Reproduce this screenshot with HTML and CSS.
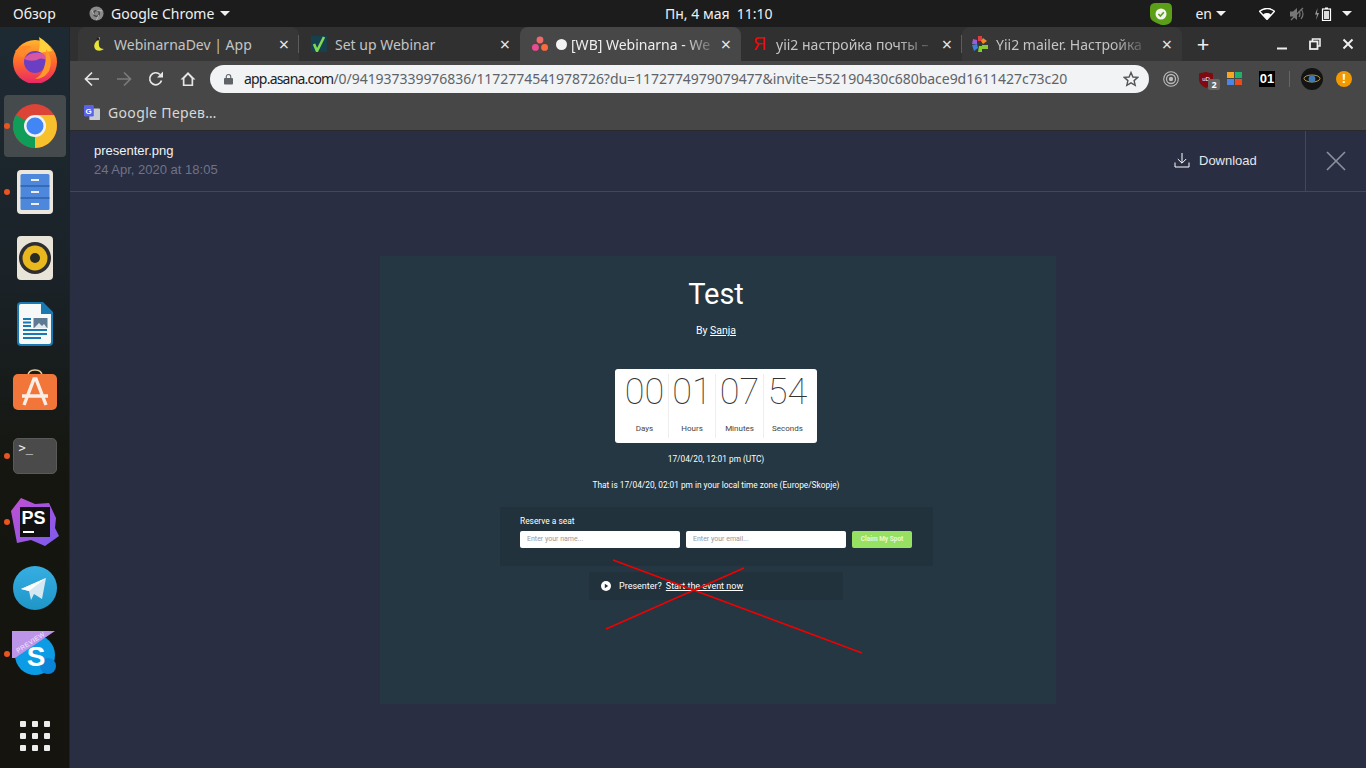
FILE: index.html
```html
<!DOCTYPE html>
<html lang="ru">
<head>
<meta charset="UTF-8">
<meta name="viewport" content="width=device-width, initial-scale=1.0">
<title>presenter.png</title>
<link rel="stylesheet" href="styles.css">
</head>
<body>

<!-- gnome top bar -->
<header class="topbar">
    <span class="overview">Обзор</span>
    <span class="app-menu">
        <svg class="app-icon" viewBox="0 0 16 16"><circle cx="8" cy="8" r="7.5" fill="#8a8a8a"/><circle cx="8" cy="8" r="3" fill="none" stroke="#444" stroke-width="1.4"/><path d="M8 5h6M5.5 9.5 3 4.5M10.5 9.5 8 15" stroke="#bdbdbd" stroke-width="1"/></svg>
        Google Chrome
        <i class="caret"></i>
    </span>
    <span class="clock">Пн, 4 мая&nbsp; 11:10</span>
    <div class="tray">
        <svg class="tray-shield" viewBox="0 0 22 22"><path d="M6 0h11q5 0 5 5v10q0 6-7 7-3 .4-6-1-3-1-6-3-3-2-3-6V5q0-5 6-5z" fill="#5b9e17"/><circle cx="11" cy="11" r="5.5" fill="#f4f4f4"/><path d="M8.4 11l2 2 3.4-3.8" fill="none" stroke="#5b9e17" stroke-width="1.6"/></svg>
        <span class="lang">en</span>
        <i class="caret caret-lang"></i>
        <svg class="tray-wifi" viewBox="0 0 16 12"><path d="M.5 3.2Q8-2.2 15.500 3.200L8 11.500z" fill="none" stroke="#fff" stroke-width="1.4"/><path d="M4 6.400Q8 3.800 12 6.400L8 11z" fill="#fff"/></svg>
        <svg class="tray-volume" viewBox="0 0 16 14"><path d="M1 4.500h3l4-3.500v12l-4-3.500H1z" fill="#777"/><path d="M10 4q2 3 0 6M12 2q4 5 0 10" fill="none" stroke="#777" stroke-width="1.2"/><path d="M2 13 14 1" stroke="#777" stroke-width="1.2"/></svg>
        <svg class="tray-battery" viewBox="0 0 20 14" width="24" height="14"><path d="M3.500 1 1 7.500h2L2 13l3-7H3z" fill="#999"/><rect x="8.500" y="2" width="8" height="11.500" fill="none" stroke="#fff" stroke-width="1.2"/><rect x="11" y=".5" width="3" height="1.500" fill="#fff"/><rect x="10" y="4" width="5" height="8" fill="#ddd"/></svg>
        <i class="caret"></i>
    </div>
</header>

<div class="desktop">
    <!-- dock -->
    <nav class="dock">
        <div class="dock-item">
            <svg viewBox="0 0 46 46" width="46" height="46"><defs><linearGradient id="ffx" x1="0" y1="0" x2="0" y2="1"><stop offset="0" stop-color="#ffb52e"/><stop offset=".5" stop-color="#ff6a2a"/><stop offset="1" stop-color="#e8256a"/></linearGradient></defs><circle cx="23" cy="25" r="22" fill="url(#ffx)"/><path d="M27 0q10 6 13 14l-14 2q3-8 1-16z" fill="#ffd23c"/><path d="M3 14q8-8 17-4-7 2-9 10-4-1-8-6z" fill="#ff8a2a"/><circle cx="23" cy="25" r="11" fill="#6a3fc4"/><path d="M12 22q7-9 20-5l3 6q-7-3-10 0-7 2-13-1z" fill="#d8559f"/><path d="M34 12q8 10 3 22-5 8-14 8 12-6 11-30z" fill="#ff9a2a"/></svg>
        </div>
        <div class="dock-item is-active is-running">
            <svg viewBox="0 0 44 44" width="44" height="44"><circle cx="22" cy="22" r="22" fill="#db4437"/><path d="M22 22 3 11A22 22 0 0 0 22 44z" fill="#0f9d58"/><path d="M22 11h19a22 22 0 0 1-19 33z" fill="#f7c12e"/><circle cx="22" cy="22" r="11" fill="#f1f1f1"/><circle cx="22" cy="22" r="8.500" fill="#4285f4"/></svg>
        </div>
        <div class="dock-item is-running">
            <svg viewBox="0 0 36 44" width="36" height="44"><rect width="36" height="44" rx="4" fill="#ebe7dc"/><rect x="3.500" y="4" width="29" height="36" rx="1.500" fill="#4d88dd"/><path d="M3.500 16h29M3.500 28h29" stroke="#1d4c90" stroke-width="1"/><path d="M14 10h8M14 22h8M14 34h8" stroke="#eee" stroke-width="2"/></svg>
        </div>
        <div class="dock-item">
            <svg viewBox="0 0 36 44" width="36" height="44"><rect width="36" height="44" rx="4" fill="#e8e4d8"/><circle cx="18" cy="22" r="16" fill="#2e2e30"/><circle cx="18" cy="22" r="12.500" fill="#e8b81e"/><circle cx="18" cy="22" r="5" fill="#2b2b25"/></svg>
        </div>
        <div class="dock-item">
            <svg viewBox="0 0 36 44" width="36" height="44"><path d="M4 0h22l10 10v30q0 4-4 4H4q-4 0-4-4V4q0-4 4-4z" fill="#1a79b0"/><path d="M4 2h20v10h10v28q0 2-2 2H4q-2 0-2-2V4q0-2 2-2z" fill="#f7f8f8"/><path d="M6 17h8M6 20.500h8M6 24h8M6 28h24M6 32h24M6 36h18" stroke="#1a79b0" stroke-width="1.800"/><rect x="16.500" y="16" width="14" height="10" fill="#5d7a92"/><path d="M17 26l5-5 3 3 2-2 3 4z" fill="#e3e8ec"/></svg>
        </div>
        <div class="dock-item">
            <svg viewBox="0 0 44 44" width="44" height="44"><path d="M15 8q0-6 7-6t7 6" fill="none" stroke="#eccf9c" stroke-width="1.500"/><rect y="6" width="44" height="36" rx="5" fill="#f2763a"/><path d="M11 37 21 11h2l10 26M9 28h26" fill="none" stroke="#fbeee6" stroke-width="3.400"/></svg>
        </div>
        <div class="dock-item is-running">
            <div class="term-icon">&gt;_</div>
        </div>
        <div class="dock-item is-running">
            <svg class="ps-shape" viewBox="0 0 48 48" width="48" height="48"><defs><linearGradient id="psg" x1="0" y1="0" x2="1" y2="1"><stop offset="0" stop-color="#c24fd0"/><stop offset="1" stop-color="#7a5cf0"/></linearGradient></defs><path d="M10 0l14 6 14-1 7 15-1 10 4 8-14 10-14-6-14 3L0 13z" fill="url(#psg)"/></svg>
            <div class="ps-icon">PS<i></i></div>
        </div>
        <div class="dock-item">
            <svg viewBox="0 0 44 44" width="44" height="44"><defs><linearGradient id="tg" x1="0" y1="0" x2="0" y2="1"><stop offset="0" stop-color="#37aee2"/><stop offset="1" stop-color="#1e96c8"/></linearGradient></defs><circle cx="22" cy="22" r="22" fill="url(#tg)"/><path d="M8 23 33 12l-4 21-8-5-3 6-2-9z" fill="#d6e8f2"/><path d="M8 23 33 12 16 25z" fill="#fff"/></svg>
        </div>
        <div class="dock-item is-running">
            <svg class="skype-icon" viewBox="0 0 46 46" width="46" height="46"><circle cx="23" cy="24" r="20" fill="#0c9ce5"/><circle cx="36" cy="35" r="8" fill="#0a84d6"/><path d="M0 0h43L3 27H0z" fill="#bd95e8"/><text class="preview-tag" x="6" y="22" transform="rotate(-33 6 22)">PREVIEW</text><text class="skype-s" x="24" y="35">S</text></svg>
        </div>
        <div class="dock-apps">
            <i></i><i></i><i></i><i></i><i></i><i></i><i></i><i></i><i></i>
        </div>
    </nav>

    <main class="browser">
        <!-- tabs -->
        <div class="tabstrip">
            <div class="tab tab-first">
                <svg class="favicon" viewBox="0 0 16 16"><path d="M9 1q-1 3-4 6-2 4 1 7 4 2 8-1-4 0-5-3-1-4 1-8z" fill="#e8e337"/><circle cx="8" cy="3" r="1.500" fill="#222"/></svg>
                <span class="tab-title">WebinarnaDev | App</span>
                <span class="tab-close">×</span>
            </div>
            <div class="tab tab-nosep">
                <svg class="favicon" viewBox="0 0 16 16"><rect width="16" height="16" fill="#17404e"/><path d="M3 8l3 7 7-14" fill="none" stroke="#7ed957" stroke-width="2.600"/></svg>
                <span class="tab-title">Set up Webinar</span>
                <span class="tab-close">×</span>
            </div>
            <div class="tab tab-active tab-nosep">
                <svg class="favicon" viewBox="0 0 14 14"><circle cx="7" cy="3.500" r="3" fill="#f06a6a"/><circle cx="3" cy="10" r="3" fill="#ec4b8f"/><circle cx="11" cy="10" r="3" fill="#ff6a3c"/></svg>
                <span class="tab-dot"></span>
                <span class="tab-title tab-fade">[WB] Webinarna - We</span>
                <span class="tab-close">×</span>
            </div>
            <div class="tab">
                <span class="favicon-ya">Я</span>
                <span class="tab-title tab-fade">yii2 настройка почты –</span>
                <span class="tab-close">×</span>
            </div>
            <div class="tab tab-last tab-nosep">
                <svg class="favicon" viewBox="0 0 16 16"><path d="M6 0h4v5H6z" fill="#e23b3b"/><path d="M11 2l4 3-4 3-2-3z" fill="#f08a24"/><path d="M16 9v4h-6V9z" fill="#8bc53f"/><path d="M10 16H6l1-6h3z" fill="#7ed321"/><path d="M0 9l5-1 1 4-4 3z" fill="#3d7fd9"/><path d="M1 3l4 1v4H0z" fill="#a05ad6"/></svg>
                <span class="tab-title tab-fade">Yii2 mailer. Настройка</span>
                <span class="tab-close">×</span>
            </div>
            <span class="tab-new">+</span>
            <div class="win-controls">
                <svg viewBox="0 0 12 12"><path d="M1 10.500h10" stroke="#eee" stroke-width="2"/></svg>
                <svg viewBox="0 0 12 12"><path d="M3.500 3.500V1h7.500v7H8.500" fill="none" stroke="#eee" stroke-width="1.600"/><rect x="1" y="3.500" width="7.500" height="7.500" fill="none" stroke="#eee" stroke-width="1.800"/></svg>
                <svg viewBox="0 0 12 12"><path d="M1.500 1.500l9 9m0-9-9 9" stroke="#eee" stroke-width="2"/></svg>
            </div>
        </div>

        <!-- address bar -->
        <div class="toolbar">
            <svg class="nav-btn" viewBox="0 0 16 16"><path d="M15 8H2m6-6.500L1.500 8 8 14.500" fill="none" stroke="#e6e6e6" stroke-width="1.700"/></svg>
            <svg class="nav-btn" viewBox="0 0 16 16"><path d="M1 8h13M8 1.500 14.500 8 8 14.500" fill="none" stroke="#7b7b7b" stroke-width="1.700"/></svg>
            <svg class="nav-btn" viewBox="0 0 16 16"><path d="M13.500 9.500A6 6 0 1 1 12 3.500" fill="none" stroke="#e6e6e6" stroke-width="1.700"/><path d="M9 6.500h6v-6z" fill="#e6e6e6"/></svg>
            <svg class="nav-btn" viewBox="0 0 16 16"><path d="M8 1 .5 8.500h2.300V15h10.400V8.500h2.300zM4.500 13.500V7.500L8 3.800l3.500 3.700v6z" fill="#e6e6e6"/></svg>
            <div class="omnibox">
                <svg class="lock" viewBox="0 0 10 12"><path d="M2.500 5V3.500a2.500 2.500 0 0 1 5 0V5" fill="none" stroke="#5f6368" stroke-width="1.200"/><rect y="5" width="10" height="7" rx="1" fill="#5f6368"/></svg>
                <span class="url"><b>app.asana.com</b>/0/941937339976836/1172774541978726?du=1172774979079477&amp;invite=552190430c680bace9d1611427c73c20</span>
                <svg class="star" viewBox="0 0 16 16"><path d="M8 1.500 9.900 6l4.900.4-3.700 3.200 1.100 4.800L8 11.900l-4.200 2.500 1.100-4.800L1.200 6.400 6.100 6z" fill="none" stroke="#555" stroke-width="1.400"/></svg>
            </div>
            <div class="extensions">
                <svg class="ext" viewBox="0 0 16 16"><circle cx="8" cy="8" r="7.300" fill="none" stroke="#bbb" stroke-width="1.100"/><circle cx="8" cy="8" r="4.500" fill="none" stroke="#bbb" stroke-width="1.300"/><circle cx="8" cy="8" r="2.200" fill="#bbb"/></svg>
                <div class="ext-ublock">
                    <svg viewBox="0 0 14 16" width="14" height="16"><path d="M0 1.500 7 0l7 1.500v6Q14 13 7 16 0 13 0 7.500z" fill="#7f0a0f"/><text class="ublock-mark" x="7" y="9">uD</text></svg>
                    <span class="ublock-badge">2</span>
                </div>
                <div class="ext-squares"><i></i><i></i><i></i><i></i></div>
                <span class="ext-binary">01</span>
                <span class="ext-sep"></span>
                <svg class="ext-globe" viewBox="0 0 22 22"><circle cx="11" cy="11" r="11" fill="#141414"/><ellipse cx="11" cy="10.500" rx="8" ry="3.500" fill="none" stroke="#b59a45" stroke-width="1"/><circle cx="11" cy="11" r="3.400" fill="#3f79b8"/></svg>
                <span class="ext-warn">!</span>
            </div>
        </div>

        <!-- bookmarks -->
        <div class="bookmarks">
            <svg class="favicon" viewBox="0 0 18 18"><rect x="6" y="4" width="12" height="13" rx="1" fill="#c8ccd2"/><rect width="11" height="13" rx="1.500" fill="#5a63e8"/><text class="translate-g" x="5.500" y="10">G</text></svg>
            <span>Google Перев…</span>
        </div>

        <!-- attachment viewer -->
        <section class="viewer">
            <div class="viewer-head">
                <div class="file-info">
                    <div class="file-name">presenter.png</div>
                    <div class="file-date">24 Apr, 2020 at 18:05</div>
                </div>
                <div class="download">
                    <svg viewBox="0 0 16 16" width="16" height="16"><path d="M8 1v10M3.800 7 8 11.200 12.200 7M1 10.500V15h14v-4.500" fill="none" stroke="#fff" stroke-width="1"/></svg>
                    Download
                </div>
                <div class="viewer-close">
                    <svg viewBox="0 0 20 20" width="20" height="20"><path d="M1 1l18 18M19 1 1 19" stroke="#8b8f9e" stroke-width="1.700"/></svg>
                </div>
            </div>

            <div class="viewer-body">
                <div class="shot">
                    <h1 class="shot-title">Test</h1>
                    <p class="shot-by">By <u>Sanja</u></p>
                    <div class="countdown">
                        <div class="count-cell"><b>00</b><span>Days</span></div>
                        <div class="count-cell"><b>01</b><span>Hours</span></div>
                        <div class="count-cell"><b>07</b><span>Minutes</span></div>
                        <div class="count-cell"><b>54</b><span>Seconds</span></div>
                    </div>
                    <p class="shot-date">17/04/20, 12:01 pm (UTC)</p>
                    <p class="shot-zone">That is 17/04/20, 02:01 pm in your local time zone (Europe/Skopje)</p>
                    <div class="reserve">
                        <div class="reserve-label">Reserve a seat</div>
                        <div class="reserve-row">
                            <div class="fake-input">Enter your name...</div>
                            <div class="fake-input">Enter your email...</div>
                            <div class="claim">Claim My Spot</div>
                        </div>
                    </div>
                    <div class="presenter">
                        <svg viewBox="0 0 10 10" width="10" height="10"><circle cx="5" cy="5" r="5" fill="#fff"/><path d="M3.800 2.800 7.200 5 3.800 7.200z" fill="#22323c"/></svg>
                        <span>Presenter?</span>
                        <u>Start the event now</u>
                    </div>
                    <!-- red cross drawn over the picture -->
                    <svg class="scribble" viewBox="0 0 676 448" width="676" height="448"><path d="M233 304 482 397M226 373 364 312" fill="none" stroke="#f00000" stroke-width="1.500"/></svg>
                </div>
            </div>
        </section>
    </main>
</div>

</body>
</html>
```

FILE: styles.css
```css
* {
    box-sizing: border-box;
}
html, body {
    height: 100%;
}
body {
    margin: 0;
    overflow: hidden;
    background-color: #1c1c1c;
    font-family: "Noto Sans", sans-serif;
    display: flex;
    flex-direction: column;
}

/* top bar */
.topbar {
    height: 27px;
    flex: none;
    display: flex;
    align-items: center;
    background-color: #1c1c1c;
    color: #f0f0f0;
    font-size: 14px;
    padding-left: 13px;
}
.overview {
    width: 76px;
}
.app-menu {
    display: flex;
    align-items: center;
    width: 576px;
}
.app-icon {
    width: 15px;
    height: 15px;
    margin-right: 7px;
}
.caret {
    width: 0;
    height: 0;
    border-left: 5px solid transparent;
    border-right: 5px solid transparent;
    border-top: 5px solid #f0f0f0;
    margin-left: 6px;
}
.caret-lang {
    margin-left: 4px;
}
.clock {
    font-size: 14px;
}
.tray {
    margin-left: auto;
    display: flex;
    align-items: center;
    padding-right: 14px;
}
.tray-shield {
    width: 22px;
    height: 22px;
    margin-right: 23px;
}
.lang {
    font-size: 14px;
}
.tray-wifi {
    width: 16px;
    height: 12px;
    margin-left: 33px;
}
.tray-volume {
    width: 16px;
    height: 14px;
    margin-left: 14px;
}
.tray-battery {
    margin-left: 7px;
}

.desktop {
    flex: 1;
    display: flex;
    min-height: 0;
}

/* dock */
.dock {
    width: 70px;
    flex: none;
    display: flex;
    flex-direction: column;
    align-items: center;
    background: linear-gradient(#1e2a33 0, #1a2227 35%, #15160f 60%, #15140f 100%);
    border-right: 1px solid #1e2230;
}
.dock-item {
    width: 62px;
    height: 62px;
    margin: 2px 0;
    flex: none;
    position: relative;
    display: flex;
    align-items: center;
    justify-content: center;
    border-radius: 4px;
}
.dock-item.is-active {
    background-color: #454a4d;
}
.dock-item.is-running::before {
    content: "";
    position: absolute;
    left: 0;
    top: 28px;
    width: 6px;
    height: 6px;
    border-radius: 50%;
    background-color: #e95420;
}
.term-icon {
    width: 44px;
    height: 36px;
    border-radius: 5px;
    background-color: #4a4a4a;
    border: 1px solid #5a5a5a;
    color: #eee;
    font-family: "DejaVu Sans Mono", monospace;
    font-size: 12px;
    line-height: 12px;
    padding: 3px 5px;
}
.ps-shape {
    position: absolute;
    left: 7px;
    top: 7px;
}
.ps-icon {
    position: absolute;
    left: 16px;
    top: 16px;
    width: 30px;
    height: 30px;
    background-color: #111;
    color: #fff;
    font-family: "Liberation Sans", sans-serif;
    font-weight: bold;
    font-size: 18px;
    line-height: 18px;
    padding: 2px 2px;
}
.ps-icon i {
    position: absolute;
    left: 3px;
    bottom: 4px;
    width: 11px;
    height: 2px;
    background-color: #fff;
}
.skype-icon {
    overflow: visible;
}
.preview-tag {
    font-family: "Liberation Sans", sans-serif;
    font-size: 6.500px;
    fill: #f3e8ff;
    letter-spacing: .4px;
}
.skype-s {
    font-family: "Liberation Sans", sans-serif;
    font-weight: bold;
    font-size: 28px;
    fill: #fff;
    text-anchor: middle;
}
.dock-apps {
    margin-top: auto;
    margin-bottom: 17px;
    display: grid;
    grid-template-columns: repeat(3, 6px);
    gap: 6px;
}
.dock-apps i {
    width: 6px;
    height: 6px;
    border-radius: 1px;
    background-color: #eee;
}

/* browser window */
.browser {
    flex: 1;
    min-width: 0;
    display: flex;
    flex-direction: column;
}
.tabstrip {
    height: 34px;
    flex: none;
    display: flex;
    align-items: stretch;
    background-color: #303030;
    padding-left: 8px;
    color: #c4c4c4;
    font-size: 14px;
}
.tab {
    width: 221px;
    flex: none;
    display: flex;
    align-items: center;
    padding: 0 8px 0 12px;
    position: relative;
    border-radius: 8px 8px 0 0;
}
.tab::after {
    content: "";
    position: absolute;
    right: 0;
    top: 8px;
    bottom: 8px;
    width: 1px;
    background-color: #5c5c5c;
}
.tab-first, .tab-last {
    background-color: #373737;
}
.tab-last {
    width: 220px;
    padding-left: 10px;
}
.tab-nosep::after {
    display: none;
}
.tab-active {
    background-color: #474747;
    color: #eee;
}
.favicon {
    width: 16px;
    height: 16px;
    flex: none;
    margin-right: 8px;
}
.favicon-ya {
    width: 16px;
    flex: none;
    margin-right: 7px;
    color: #f00;
    font-family: "Liberation Sans", sans-serif;
    font-size: 18px;
}
.tab-dot {
    width: 11px;
    height: 11px;
    flex: none;
    border-radius: 50%;
    background-color: #f4f4f4;
    margin-right: 4px;
}
.tab-title {
    white-space: nowrap;
}
.tab-fade {
    -webkit-mask-image: linear-gradient(90deg, #000 80%, rgba(0, 0, 0, .25));
    mask-image: linear-gradient(90deg, #000 80%, rgba(0, 0, 0, .25));
}
.tab-close {
    width: 14px;
    flex: none;
    margin-left: auto;
    text-align: center;
    font-size: 18px;
    line-height: 18px;
    color: #e6e6e6;
}
.tab-new {
    width: 40px;
    text-align: center;
    color: #eee;
    font-size: 22px;
    line-height: 32px;
    margin-left: 1px;
}
.win-controls {
    margin-left: auto;
    display: flex;
    align-items: center;
    gap: 21px;
    padding-right: 12px;
}
.win-controls svg {
    width: 12px;
    height: 12px;
}
.toolbar {
    height: 35px;
    flex: none;
    display: flex;
    align-items: center;
    background-color: #474747;
    padding-left: 14px;
}
.nav-btn {
    width: 16px;
    height: 16px;
    margin-right: 16px;
    flex: none;
}
.omnibox {
    width: 939px;
    height: 28px;
    margin-left: -2px;
    flex: none;
    display: flex;
    align-items: center;
    background-color: #f1f3f4;
    border-radius: 14px;
    padding: 0 10px 0 14px;
}
.lock {
    width: 9px;
    height: 12px;
    margin-right: 11px;
}
.url {
    flex: 1;
    white-space: nowrap;
    font-size: 14px;
    letter-spacing: -.04px;
    color: #5f6368;
}
.url b {
    font-weight: normal;
    letter-spacing: -.8px;
    color: #202124;
}
.star {
    width: 16px;
    height: 16px;
}
.extensions {
    flex: 1;
    display: flex;
    align-items: center;
    padding-left: 14px;
}
.ext {
    width: 16px;
    height: 16px;
    margin-right: 20px;
}
.ext-ublock {
    position: relative;
    width: 14px;
    height: 16px;
    margin-right: 14px;
}
.ublock-mark {
    font-family: "Liberation Sans", sans-serif;
    font-size: 6px;
    fill: #fff;
    text-anchor: middle;
}
.ublock-badge {
    position: absolute;
    left: 9px;
    top: 8px;
    width: 12px;
    height: 11px;
    border-radius: 2px;
    background-color: #666;
    color: #fff;
    font-size: 9px;
    font-weight: bold;
    line-height: 11px;
    text-align: center;
}
.ext-squares {
    display: grid;
    grid-template-columns: 7px 7px;
    gap: 1px;
    margin-right: 17px;
}
.ext-squares i {
    height: 6px;
    background-color: #f5a623;
}
.ext-squares i:nth-child(2) {
    background-color: #1db26b;
}
.ext-squares i:nth-child(3) {
    background-color: #4a86e8;
}
.ext-squares i:nth-child(4) {
    background-color: #ea4a1f;
}
.ext-binary {
    width: 16px;
    height: 16px;
    background-color: #000;
    color: #fff;
    font-family: "Liberation Sans", sans-serif;
    font-weight: bold;
    font-size: 13px;
    line-height: 16px;
    text-align: center;
}
.ext-sep {
    width: 1px;
    height: 16px;
    background-color: #666;
    margin: 0 11px 0 14px;
}
.ext-globe {
    width: 22px;
    height: 22px;
    margin-right: 13px;
}
.ext-warn {
    width: 16px;
    height: 16px;
    border-radius: 50%;
    background-color: #f29900;
    color: #fff;
    font-size: 12px;
    font-weight: bold;
    line-height: 16px;
    text-align: center;
}
.bookmarks {
    height: 35px;
    flex: none;
    display: flex;
    align-items: center;
    background-color: #474747;
    border-bottom: 1px solid #2a2a2a;
    padding: 0 0 1px 14px;
    color: #d8d8d8;
    font-size: 14px;
    letter-spacing: .35px;
}
.translate-g {
    font-family: "Liberation Sans", sans-serif;
    font-weight: bold;
    font-size: 9px;
    fill: #fff;
    text-anchor: middle;
}

/* attachment viewer */
.viewer {
    flex: 1;
    min-height: 0;
    display: flex;
    flex-direction: column;
    background-color: #292e43;
    font-family: "Liberation Sans", sans-serif;
}
.viewer-head {
    height: 61px;
    flex: none;
    display: flex;
    align-items: center;
    border-bottom: 1px solid #434759;
    padding-left: 24px;
}
.file-info {
    flex: 1;
}
.file-name {
    color: #f1f2f4;
    font-size: 13px;
    line-height: 17px;
}
.file-date {
    color: #6f7384;
    font-size: 13px;
    line-height: 21px;
}
.download {
    display: flex;
    align-items: center;
    gap: 9px;
    color: #e6e7ea;
    font-size: 13px;
    width: 131px;
    margin-bottom: 2px;
}
.viewer-close {
    width: 61px;
    height: 100%;
    display: flex;
    align-items: center;
    justify-content: center;
    border-left: 1px solid #434759;
}
.viewer-body {
    flex: 1;
    display: flex;
    justify-content: center;
    padding-top: 64px;
}

/* the screenshot shown in the viewer */
.shot {
    width: 676px;
    height: 448px;
    position: relative;
    display: flex;
    flex-direction: column;
    align-items: center;
    padding-right: 4px;
    background-color: #243742;
    color: #fff;
    font-family: Roboto, sans-serif;
}
.shot-title {
    margin: 20px 0 0;
    font-size: 29px;
    font-weight: 400;
    line-height: 36px;
}
.shot-by {
    margin: 12px 0 0;
    font-size: 10.500px;
    line-height: 14px;
}
.countdown {
    margin-top: 31px;
    width: 202px;
    height: 74px;
    flex: none;
    display: grid;
    grid-template-columns: 54px 47px 48px 53px;
    background-color: #fff;
    border-radius: 3px;
    color: #333;
    padding: 5px 0;
}
.count-cell {
    display: flex;
    flex-direction: column;
    align-items: center;
    border-right: 1px solid #eee;
}
.count-cell:first-child {
    padding-left: 6px;
}
.count-cell:last-child {
    border-right: none;
    padding-right: 6px;
}
.count-cell b {
    font-weight: 100;
    font-size: 36px;
    line-height: 36px;
}
.count-cell span {
    margin-top: 13px;
    font-size: 8px;
    line-height: 12px;
    color: #444;
}
.shot-date {
    margin: 10px 0 0;
    font-size: 8.300px;
    line-height: 12px;
}
.shot-zone {
    margin: 14px 0 0;
    font-size: 8.300px;
    line-height: 12px;
}
.reserve {
    margin-top: 16px;
    width: 433px;
    height: 59px;
    flex: none;
    background-color: #22323c;
    padding: 8px 20px 0;
    align-self: flex-start;
    margin-left: 120px;
}
.reserve-label {
    font-size: 8.400px;
    line-height: 12px;
    margin-bottom: 4px;
}
.reserve-row {
    display: flex;
    gap: 6px;
}
.fake-input {
    width: 160px;
    height: 17px;
    padding-left: 7px;
    background-color: #fff;
    border-radius: 2px;
    color: #999;
    font-size: 7px;
    line-height: 17px;
}
.claim {
    width: 60px;
    height: 17px;
    background-color: #97e162;
    border-radius: 2px;
    color: #e8f7d8;
    font-size: 6.500px;
    font-weight: 700;
    line-height: 17px;
    text-align: center;
}
.presenter {
    margin-top: 6px;
    width: 254px;
    height: 28px;
    flex: none;
    display: flex;
    align-items: center;
    gap: 4px;
    background-color: #22323c;
    padding-left: 12px;
    font-size: 9px;
    align-self: flex-start;
    margin-left: 209px;
}
.presenter svg {
    margin-right: 4px;
}
.scribble {
    position: absolute;
    left: 0;
    top: 0;
}
```
